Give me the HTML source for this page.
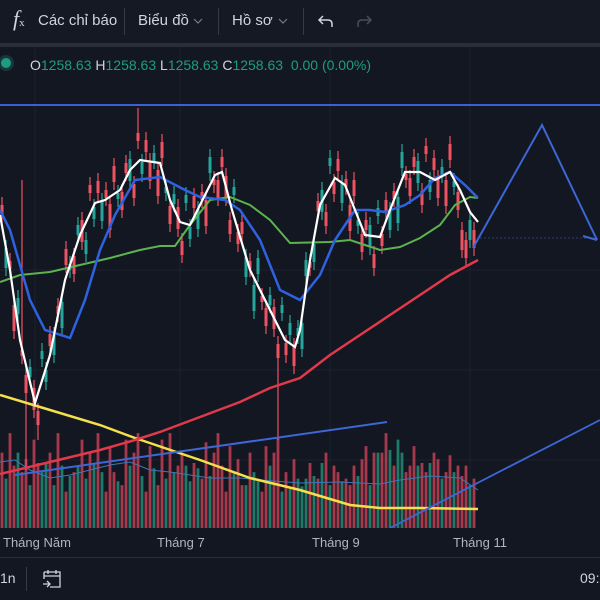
<!DOCTYPE html>
<html><head><meta charset="utf-8"><style>
html,body{margin:0;padding:0;width:600px;height:600px;overflow:hidden;background:#131722;font-family:"Liberation Sans",sans-serif;}
.top{position:absolute;left:0;top:0;width:600px;height:43px;background:#151923;color:#d1d4dc;font-size:15px;}
.sep{position:absolute;width:1px;background:#363a45;top:8px;height:27px}
.t{position:absolute;top:12px;white-space:nowrap}
.band{position:absolute;top:43px;left:0;width:600px;height:4px;background:#2a2e39}
</style></head><body>
<svg style="position:absolute;left:0;top:0" width="600" height="600">
<g stroke="#1c2030" stroke-width="1">
<path d="M0 270H600M0 370H600M0 460H600M35 47V528M180 47V528M330 47V528M470 47V528"/>
</g>
<path d="M480 238H600" stroke="#2a3c6a" stroke-dasharray="2 2"/>
<!-- volume -->
<g transform="translate(0,528) scale(1,1.3) translate(0,-528)">
<path stroke="#a8394a" stroke-width="2.8" fill="none" d="M2 528V470M10 528V455M14 528V480M22 528V485M26 528V475M34 528V460M38 528V478M50 528V470M58 528V455M66 528V500M74 528V485M82 528V460M90 528V470M98 528V455M106 528V500M110 528V465M114 528V485M122 528V495M126 528V460M134 528V470M138 528V455M146 528V500M150 528V465M158 528V495M162 528V460M170 528V455M178 528V480M182 528V470M194 528V478M202 528V490M206 528V462M214 528V470M218 528V455M222 528V480M226 528V500M230 528V465M238 528V475M242 528V495M250 528V470M262 528V500M266 528V465M274 528V470M278 528V458M286 528V485M294 528V475M310 528V478M318 528V490M326 528V470M334 528V480M338 528V485M346 528V490M350 528V495M354 528V480M362 528V475M366 528V465M374 528V470M382 528V470M386 528V455M394 528V480M406 528V485M410 528V480M414 528V465M422 528V478M426 528V485M434 528V470M438 528V475M446 528V485M450 528V472M458 528V480M462 528V488M466 528V480M474 528V490"/>
<path stroke="#1f7a68" stroke-width="2.8" fill="none" d="M6 528V490M18 528V470M30 528V495M42 528V485M46 528V478M54 528V495M62 528V480M70 528V488M78 528V480M86 528V490M94 528V478M102 528V485M118 528V492M130 528V480M142 528V488M154 528V482M166 528V490M174 528V485M186 528V480M190 528V492M198 528V482M210 528V488M234 528V485M246 528V495M254 528V485M258 528V492M270 528V480M282 528V500M290 528V498M298 528V490M302 528V496M306 528V490M314 528V488M322 528V478M330 528V495M342 528V492M358 528V488M370 528V495M378 528V470M390 528V468M398 528V460M402 528V470M418 528V480M430 528V478M442 528V490M454 528V485M470 528V495"/>
</g>
<path d="M0 462L15 460L30 470L50 478L70 475L90 470L110 465L130 462L150 470L170 472L190 475L210 478L240 478L260 480L300 483L340 482L380 484L400 480L430 476L460 478L478 490" stroke="#3c78b8" fill="none" stroke-width="1"/>
<!-- candles red -->
<path stroke="#ef5361" stroke-width="1.2" fill="none" d="M2 197V225M10 253V277M14 297V339M22 180V364M26 367V470M34 380V418M38 403V440M50 326V354M58 298V322M66 241V273M74 248V282M82 212V250M90 177V201M98 173V201M106 182V206M110 196V238M114 158V190M122 184V218M126 155V181M134 176V206M138 108V149M146 132V160M150 153V189M158 162V204M162 134V166M170 198V232M178 199V237M182 233V263M194 188V216M202 184V208M206 192V234M214 171V193M218 172V206M222 149V175M226 168V206M230 212V242M238 224V252M242 214V242M250 253V277M262 288V310M266 300V334M274 299V337M278 336V440M286 335V363M294 338V374M310 254V276M318 193V219M326 204V234M334 174V202M338 151V179M346 171V195M350 197V239M354 172V204M362 226V260M366 212V238M374 246V276M382 226V254M386 192V220M394 183V207M406 166V188M410 170V204M414 149V175M422 183V213M426 138V162M434 150V178M438 170V206M446 172V214M450 136V168M458 184V218M462 222V258M466 232V266M474 222V256"/>
<path stroke="#ef5361" stroke-width="3" fill="none" d="M2 205V217M10 261V269M14 305V331M22 350V356M26 375V393M34 388V410M38 411V425M50 334V346M58 306V314M66 249V265M74 256V274M82 220V242M90 185V193M98 181V193M106 190V198M110 204V230M114 166V182M122 192V210M126 163V173M134 184V198M138 133V141M146 140V152M150 161V181M158 170V196M162 142V158M170 206V224M178 207V229M182 241V255M194 196V208M202 192V200M206 200V226M214 179V185M218 180V198M222 157V167M226 176V198M230 220V234M238 232V244M242 222V234M250 261V269M262 296V302M266 308V326M274 307V329M278 344V358M286 343V355M294 346V366M310 262V268M318 201V211M326 212V226M334 182V194M338 159V171M346 179V187M350 205V231M354 180V196M362 234V252M366 220V230M374 254V268M382 234V246M386 200V212M394 191V199M406 174V180M410 178V196M414 157V167M422 191V205M426 146V154M434 158V170M438 178V198M446 180V206M450 144V160M458 192V210M462 230V250M466 240V258M474 230V248"/>
<!-- candles green -->
<path stroke="#26a69a" stroke-width="1.2" fill="none" d="M6 240V276M18 290V322M30 359V385M42 343V367M46 362V390M54 327V363M62 294V336M70 256V278M78 217V243M86 232V262M94 199V227M102 193V229M118 185V207M130 151V189M142 154V182M154 145V169M166 179V201M174 186V212M186 187V211M190 219V247M198 201V237M210 149V181M234 179V203M246 249V285M254 277V319M258 250V282M270 287V313M282 297V321M290 315V343M298 320V344M302 315V357M306 252V284M314 236V270M322 182V220M330 150V174M342 175V211M358 212V234M370 217V255M378 200V224M390 202V238M398 189V231M402 144V176M418 153V191M430 172V200M442 159V183M454 173V195M470 212V248"/>
<path stroke="#26a69a" stroke-width="3" fill="none" d="M6 248V268M18 298V314M30 367V377M42 351V359M46 370V382M54 335V355M62 302V328M70 264V270M78 225V235M86 240V254M94 207V219M102 201V221M118 193V199M130 159V181M142 162V174M154 153V161M166 187V193M174 194V204M186 195V203M190 227V239M198 209V229M210 157V173M234 187V195M246 257V277M254 285V311M258 258V274M270 295V305M282 305V313M290 323V335M298 328V336M302 323V349M306 260V276M314 244V262M322 190V212M330 158V166M342 183V203M358 220V226M370 225V247M378 208V216M390 210V230M398 197V223M402 152V168M418 161V183M430 180V192M442 167V175M454 181V187M470 220V240"/>
<!-- lines -->
<path d="M0 105H600" stroke="#3d5fd6" stroke-width="2"/>
<path d="M0 395L50 410L100 425L135 438L200 460L250 478L300 490L350 505L380 508L420 508L478 509" stroke="#f5e04b" fill="none" stroke-width="2.5"/>
<path d="M0 474L50 462L100 450L135 440L160 432L200 417L240 402L270 388L300 378L330 355L360 335L390 315L420 295L450 275L478 260" stroke="#e0394a" fill="none" stroke-width="2.5"/>
<path d="M15 475L387 422" stroke="#3d66d6" stroke-width="2"/>
<path d="M390 528L600 420" stroke="#3d66d6" stroke-width="1.8"/>
<path d="M0 282L20 275L50 272L80 265L110 258L140 250L160 246L175 246L190 225L210 200L230 197L250 205L270 220L290 243L330 242L350 240L365 245L380 250L400 247L420 238L440 225L455 205L470 197L478 198" stroke="#5cb34f" fill="none" stroke-width="2"/>
<path d="M0 210L10 230L30 300L45 330L70 338L85 300L100 250L115 215L135 180L160 177L185 190L200 197L225 200L240 210L260 240L280 290L300 300L320 275L335 240L355 210L370 210L385 212L405 205L420 195L435 178L450 172L465 185L478 198" stroke="#2f62e0" fill="none" stroke-width="2.5"/>
<path d="M0 215L10 270L20 340L35 403L50 355L65 280L80 235L95 203L105 200L120 190L130 170L140 160L160 163L170 200L180 222L190 225L200 205L215 175L222 172L232 210L250 270L270 310L285 340L295 347L300 330L310 260L320 205L335 178L345 185L355 210L365 235L380 237L390 210L405 172L420 172L435 180L450 172L460 190L470 212L478 222" stroke="#ffffff" fill="none" stroke-width="2.2"/>
<path d="M473 248L542 125L597 240M583 236L597 240" stroke="#3d66d6" fill="none" stroke-width="2"/>
<rect x="0" y="528" width="600" height="72" fill="#131722"/>
<path d="M0 557.5H600" stroke="#2a2e39"/>
</svg>
<div class="top">
 <div class="t" style="left:13px;top:6px;font-family:'Liberation Serif',serif;font-style:italic;font-size:22px">f<span style="font-size:11px;font-style:normal">x</span></div>
 <div class="t" style="left:38px">Các chỉ báo</div>
 <div class="sep" style="left:124px"></div>
 <div class="t" style="left:138px">Biểu đồ</div>
 <svg style="position:absolute;left:193px;top:17px" width="10" height="8"><path d="M1 2 L5 6 L9 2" stroke="#787b86" fill="none" stroke-width="1.2"/></svg>
 <div class="sep" style="left:218px"></div>
 <div class="t" style="left:232px">Hồ sơ</div>
 <svg style="position:absolute;left:278px;top:17px" width="10" height="8"><path d="M1 2 L5 6 L9 2" stroke="#787b86" fill="none" stroke-width="1.2"/></svg>
 <div class="sep" style="left:303px"></div>
 <svg style="position:absolute;left:316px;top:12px" width="20" height="18"><path d="M7 4 L3 8 L7 12 M3 8 H12 Q16 8 16 12 V15" stroke="#d1d4dc" fill="none" stroke-width="1.5"/></svg>
 <svg style="position:absolute;left:354px;top:12px" width="20" height="18"><path d="M13 4 L17 8 L13 12 M17 8 H8 Q4 8 4 12 V15" stroke="#4a4e59" fill="none" stroke-width="1.5"/></svg>
</div>
<div class="band"></div>
<div style="position:absolute;left:1px;top:58px;width:10px;height:10px;border-radius:50%;background:#1e9c82;box-shadow:0 0 0 3px rgba(30,156,130,0.25)"></div>
<div style="position:absolute;left:30px;top:57px;font-size:14px;color:#1e9c82;white-space:nowrap"><span style="color:#d1d4dc">O</span>1258.63 <span style="color:#d1d4dc">H</span>1258.63 <span style="color:#d1d4dc">L</span>1258.63 <span style="color:#d1d4dc">C</span>1258.63 &nbsp;0.00 (0.00%)</div>
<div style="position:absolute;top:535px;left:0;width:600px;font-size:13px;color:#b2b5be">
 <span style="position:absolute;left:3px">Tháng Năm</span>
 <span style="position:absolute;left:157px">Tháng 7</span>
 <span style="position:absolute;left:312px">Tháng 9</span>
 <span style="position:absolute;left:453px">Tháng 11</span>
</div>
<div style="position:absolute;top:570px;left:0;font-size:14px;color:#d1d4dc">1n</div>
<div style="position:absolute;top:567px;left:26px;width:1px;height:24px;background:#363a45"></div>
<svg style="position:absolute;left:41px;top:567px" width="24" height="24"><path d="M3 5 H19 V20 H9 M3 5 V12 M3 9 H19 M7 3 V7 M15 3 V7 M2 17 H9 M6 14 L9 17 L6 20" stroke="#d1d4dc" fill="none" stroke-width="1.3"/></svg>
<div style="position:absolute;top:570px;left:580px;font-size:14px;color:#d1d4dc">09:</div>
</body></html>
